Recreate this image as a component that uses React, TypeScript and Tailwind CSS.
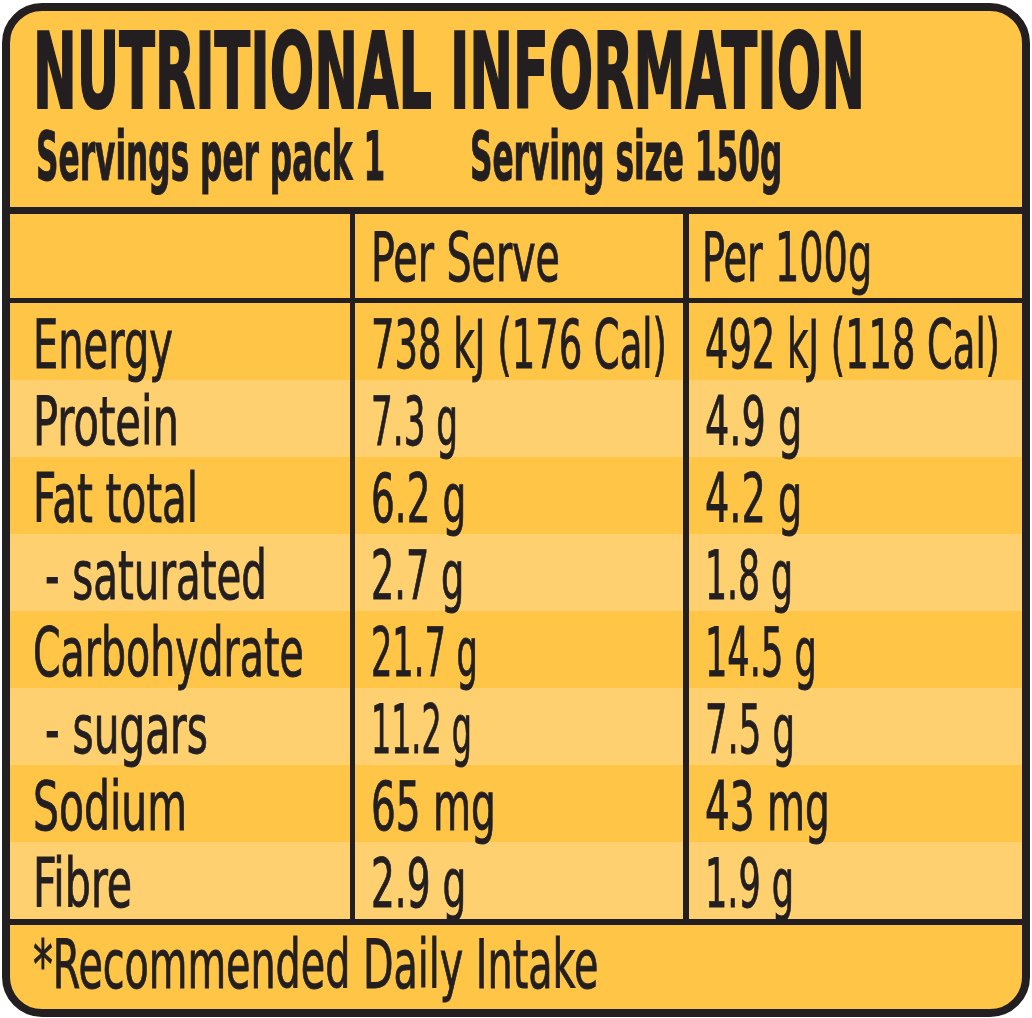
import React, { useLayoutEffect, useRef, useState } from "react";

const FONT = "[font-family:'DejaVu_Sans_Condensed','Liberation_Sans_Narrow','Liberation_Sans',sans-serif]";

function Fit({ w, children, className = "" }: { w: number; children: React.ReactNode; className?: string }) {
  const ref = useRef<HTMLSpanElement>(null);
  const [s, setS] = useState(1);
  useLayoutEffect(() => {
    const measure = () => {
      if (ref.current) {
        const nat = ref.current.offsetWidth;
        if (nat) setS(w / nat);
      }
    };
    measure();
    if (document.fonts && document.fonts.ready) document.fonts.ready.then(measure);
  }, [w]);
  return (
    <span
      ref={ref}
      className={`inline-block origin-left whitespace-nowrap ${className}`}
      style={{ transform: `scaleX(${s})` }}
    >
      {children}
    </span>
  );
}

type Row = {
  label: string;
  lw: number;
  indent?: boolean;
  serve: string;
  sw: number;
  per100: string;
  pw: number;
  light: boolean;
};

const rows: Row[] = [
  { label: "Energy", lw: 140, serve: "738 kJ (176 Cal)", sw: 296, per100: "492 kJ (118 Cal)", pw: 295, light: false },
  { label: "Protein", lw: 146, serve: "7.3 g", sw: 87, per100: "4.9 g", pw: 97, light: true },
  { label: "Fat total", lw: 165, serve: "6.2 g", sw: 95, per100: "4.2 g", pw: 97, light: false },
  { label: "- saturated", lw: 222, indent: true, serve: "2.7 g", sw: 93, per100: "1.8 g", pw: 88, light: true },
  { label: "Carbohydrate", lw: 271, serve: "21.7 g", sw: 107, per100: "14.5 g", pw: 112, light: false },
  { label: "- sugars", lw: 163, indent: true, serve: "11.2 g", sw: 101, per100: "7.5 g", pw: 90, light: true },
  { label: "Sodium", lw: 154, serve: "65 mg", sw: 125, per100: "43 mg", pw: 125, light: false },
  { label: "Fibre", lw: 99, serve: "2.9 g", sw: 95, per100: "1.9 g", pw: 89, light: true },
];

const REG = "[-webkit-text-stroke:0.9px_#231f20]";

export default function App() {
  return (
    <div className={`w-[1032px] h-[1018px] bg-white pt-[3px] pl-[2px] ${FONT} text-[#231f20]`}>
      <div className="w-[1028px] h-[1014px] border-[8px] border-[#231f20] rounded-[40px] bg-[#fec546] overflow-hidden flex flex-col">
        {/* Header */}
        <div className="h-[196px] shrink-0 pl-[23px] pt-[9px] flex flex-col">
          <div className="h-[105px] text-[105px] leading-none font-bold [-webkit-text-stroke:2px_#231f20]">
            <Fit w={832}>NUTRITIONAL INFORMATION</Fit>
          </div>
          <div className="h-[67px] -mt-[1px] text-[67px] leading-none font-bold flex [-webkit-text-stroke:1px_#231f20]">
            <div className="w-[437px] shrink-0 pl-[3px] overflow-visible">
              <Fit w={349}>Servings per pack 1</Fit>
            </div>
            <div className="w-[400px] shrink-0 overflow-visible">
              <Fit w={312}>Serving size 150g</Fit>
            </div>
          </div>
        </div>
        <div className="h-[7px] shrink-0 bg-[#231f20]" />
        {/* Column header */}
        <div className={`h-[84px] shrink-0 flex ${REG}`}>
          <div className="w-[345px] shrink-0 border-r-[5px] border-[#231f20]" />
          <div className="w-[334px] shrink-0 border-r-[6px] border-[#231f20] pl-[16px] pt-[11px] text-[67px] leading-none">
            <Fit w={189}>Per Serve</Fit>
          </div>
          <div className="flex-1 min-w-0 pl-[13px] pt-[11px] text-[67px] leading-none">
            <Fit w={170}>Per 100g</Fit>
          </div>
        </div>
        <div className="h-[5px] shrink-0 bg-[#231f20]" />
        {/* Rows */}
        <div className={`flex flex-col shrink-0 ${REG}`}>
          {rows.map((r) => (
            <div
              key={r.label}
              className={`h-[77px] flex text-[67px] leading-none ${r.light ? "bg-[#fed06f]" : "bg-[#fec546]"}`}
            >
              <div className={`w-[345px] shrink-0 border-r-[5px] border-[#231f20] pt-[9px] ${r.indent ? "pl-[35px]" : "pl-[23px]"}`}>
                <Fit w={r.lw}>{r.label}</Fit>
              </div>
              <div className="w-[334px] shrink-0 border-r-[6px] border-[#231f20] pl-[16px] pt-[9px]">
                <Fit w={r.sw}>{r.serve}</Fit>
              </div>
              <div className="flex-1 min-w-0 pl-[16px] pt-[9px]">
                <Fit w={r.pw}>{r.per100}</Fit>
              </div>
            </div>
          ))}
        </div>
        <div className="h-[6px] shrink-0 bg-[#231f20]" />
        {/* Footer */}
        <div className={`flex-1 pl-[23px] pt-[7px] text-[67px] leading-none ${REG}`}>
          <Fit w={565}>*Recommended Daily Intake</Fit>
        </div>
      </div>
    </div>
  );
}
